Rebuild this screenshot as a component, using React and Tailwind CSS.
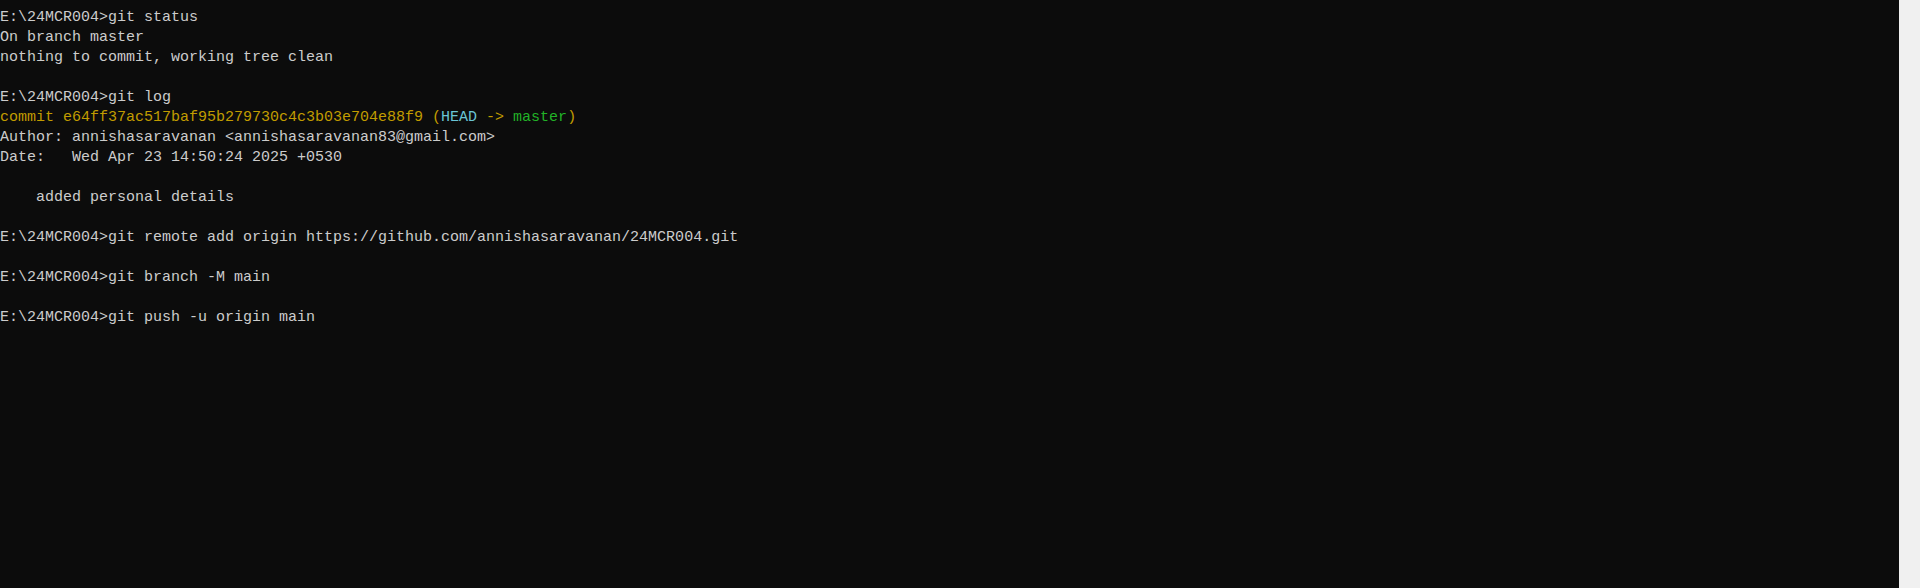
export default function App() {
  const prompt = 'E:\\24MCR004>';

  return (
    <div className="flex h-[588px] w-full overflow-hidden bg-[#0c0c0c]">
      <div className="flex-1 bg-[#0c0c0c] pt-[8px] font-['Liberation_Mono',monospace] text-[15px] leading-[20px] text-[#cccccc] whitespace-pre">
        <div>{prompt}git status</div>
        <div>On branch master</div>
        <div>nothing to commit, working tree clean</div>
        <div>&nbsp;</div>
        <div>{prompt}git log</div>
        <div className="text-[#c19c00]">
          commit e64ff37ac517baf95b279730c4c3b03e704e88f9 (<span className="text-[#6ac4d4]">HEAD</span> -&gt; <span className="text-[#22b327]">master</span>)
        </div>
        <div>Author: annishasaravanan &lt;annishasaravanan83@gmail.com&gt;</div>
        <div>Date:   Wed Apr 23 14:50:24 2025 +0530</div>
        <div>&nbsp;</div>
        <div>    added personal details</div>
        <div>&nbsp;</div>
        <div>{prompt}git remote add origin https://github.com/annishasaravanan/24MCR004.git</div>
        <div>&nbsp;</div>
        <div>{prompt}git branch -M main</div>
        <div>&nbsp;</div>
        <div>{prompt}git push -u origin main</div>
      </div>
      <div className="w-[21px] shrink-0 bg-[#f0f0f0]"></div>
    </div>
  );
}
